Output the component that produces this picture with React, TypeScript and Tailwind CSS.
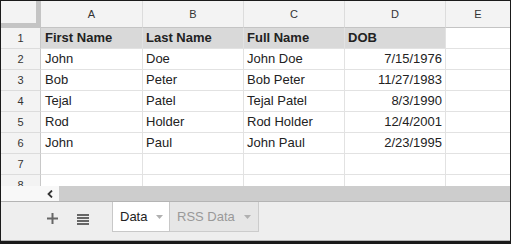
import React from "react"

const rows = [
  ["First Name", "Last Name", "Full Name", "DOB"],
  ["John", "Doe", "John Doe", "7/15/1976"],
  ["Bob", "Peter", "Bob Peter", "11/27/1983"],
  ["Tejal", "Patel", "Tejal Patel", "8/3/1990"],
  ["Rod", "Holder", "Rod Holder", "12/4/2001"],
  ["John", "Paul", "John Paul", "2/23/1995"],
  ["", "", "", ""],
  ["", "", "", ""],
]

function Caret({ color }: { color: string }) {
  return (
    <svg width="7" height="4" viewBox="0 0 7 4" className="shrink-0">
      <path d="M0 0H7L3.5 4Z" fill={color} />
    </svg>
  )
}

export default function App() {
  return (
    <div
      className="w-[511px] h-[244px] overflow-hidden flex flex-col bg-white border-t border-l border-r border-b-[3px] border-[#1a1a1a] text-[#222]"
      style={{ fontFamily: '"Liberation Sans", Arial, sans-serif' }}
    >
      {/* grid */}
      <div className="h-[185px] shrink-0 overflow-hidden flex flex-col">
        <div className="flex h-[27px] shrink-0 bg-[#f3f3f3] text-[11px] text-[#333]">
          <div className="w-[40px] shrink-0 border-r-[5px] border-b-[5px] border-[#c4c4c4]" />
          <div className="w-[102px] shrink-0 border-r border-b border-r-[#dcdcdc] border-b-[#c4c4c4] flex items-center justify-center">A</div>
          <div className="w-[101px] shrink-0 border-r border-b border-r-[#dcdcdc] border-b-[#c4c4c4] flex items-center justify-center">B</div>
          <div className="w-[101px] shrink-0 border-r border-b border-r-[#dcdcdc] border-b-[#c4c4c4] flex items-center justify-center">C</div>
          <div className="w-[101px] shrink-0 border-r border-b border-r-[#dcdcdc] border-b-[#c4c4c4] flex items-center justify-center">D</div>
          <div className="flex-1 border-b border-b-[#c4c4c4] flex items-center justify-center">E</div>
        </div>
        {rows.map((r, i) => {
          const head = i === 0
          const cell = head
            ? "bg-[#d9d9d9] font-bold"
            : "bg-white"
          return (
            <div key={i} className="flex h-[21px] shrink-0 text-[13px]">
              <div className="w-[40px] shrink-0 bg-[#f3f3f3] border-r border-b border-r-[#c8c8c8] border-b-[#dcdcdc] flex items-center justify-center text-[11px] text-[#333]">
                {i + 1}
              </div>
              <div className={`w-[102px] shrink-0 border-r border-b border-[#e2e2e2] flex items-center px-[4px] ${cell}`}>{r[0]}</div>
              <div className={`w-[101px] shrink-0 border-r border-b border-[#e2e2e2] flex items-center px-[3px] ${cell}`}>{r[1]}</div>
              <div className={`w-[101px] shrink-0 border-r border-b border-[#e2e2e2] flex items-center px-[3px] ${cell}`}>{r[2]}</div>
              <div className={`w-[101px] shrink-0 border-r border-b border-[#e2e2e2] flex items-center px-[3px] ${head ? "justify-start" : "justify-end"} ${cell}`}>{r[3]}</div>
              <div className="flex-1 border-b border-[#e2e2e2]" />
            </div>
          )
        })}
      </div>

      {/* horizontal scrollbar */}
      <div className="flex h-[15px] shrink-0">
        <div className="w-[40px] shrink-0 bg-[#f8f8f8]" />
        <div className="w-[18px] shrink-0 bg-[#f8f8f8] flex items-center pl-[6px] text-[#333]">
          <svg width="6" height="8" viewBox="0 0 6 8">
            <path d="M5 0.5L1.5 4L5 7.5" stroke="#333" strokeWidth="1.8" fill="none" />
          </svg>
        </div>
        <div className="flex-1 bg-[#cdcdcd]" />
      </div>

      {/* sheet tabs */}
      <div className="h-[40px] shrink-0 bg-[#eeeeee] border-t border-b border-[#b4b4b4] flex items-start">
        <svg width="11" height="11" viewBox="0 0 11 11" className="ml-[46px] mt-[11px] shrink-0">
          <path d="M5.5 0V11M0 5.5H11" stroke="#666" strokeWidth="2" />
        </svg>
        <svg width="12" height="11" viewBox="0 0 12 11" className="ml-[19px] mt-[12px] shrink-0">
          <path d="M0 1H12M0 4H12M0 7H12M0 10H12" stroke="#666" strokeWidth="2" />
        </svg>
        <div className="ml-[23px] h-[30px] w-[58px] shrink-0 bg-white border-l border-r border-b border-[#c8c8c8] flex items-center pl-[7px] gap-[9px] text-[13px] text-[#222]">
          <span>Data</span>
          <Caret color="#b0b0b0" />
        </div>
        <div className="h-[30px] w-[89px] shrink-0 bg-[#e6e6e6] border-r border-b border-[#cccccc] flex items-center pl-[7px] gap-[9px] text-[13px] text-[#999]">
          <span>RSS Data</span>
          <Caret color="#b0b0b0" />
        </div>
      </div>
    </div>
  )
}
